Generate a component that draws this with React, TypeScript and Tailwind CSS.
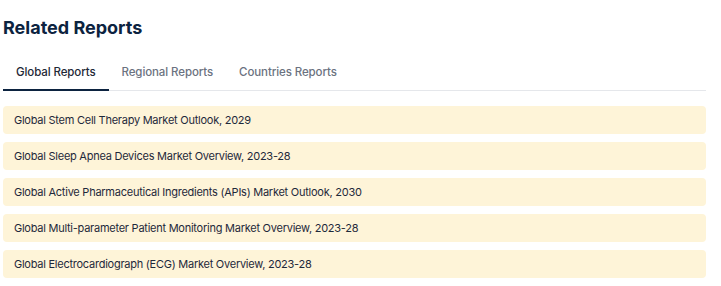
export default function App() {
  const tabs = ["Global Reports", "Regional Reports", "Countries Reports"];
  const items = [
    "Global Stem Cell Therapy Market Outlook, 2029",
    "Global Sleep Apnea Devices Market Overview, 2023-28",
    "Global Active Pharmaceutical Ingredients (APIs) Market Outlook, 2030",
    "Global Multi-parameter Patient Monitoring Market Overview, 2023-28",
    "Global Electrocardiograph (ECG) Market Overview, 2023-28",
  ];
  return (
    <div className="w-[721px] h-[286px] bg-white pl-[3px] pr-[15px] pt-[16px] font-['Inter',sans-serif]">
      <h2 className="text-[18px] leading-[24px] font-bold text-[#0c2340]">Related Reports</h2>
      <div className="mt-[23px] flex border-b border-[#e5e7eb]">
        {tabs.map((t, i) => (
          <div
            key={t}
            className={
              i === 0
                ? "px-[13px] pb-[9px] pt-[1px] text-[11.5px] leading-[16px] tracking-[-0.1px] font-medium text-[#1f2937] border-b-2 border-[#0c2340] -mb-px"
                : "px-[13px] pb-[9px] pt-[1px] text-[11.5px] leading-[16px] tracking-[-0.1px] font-medium text-[#6b7280]"
            }
          >
            {t}
          </div>
        ))}
      </div>
      <div className="mt-[15px] flex flex-col gap-[8px]">
        {items.map((t) => (
          <div
            key={t}
            className="h-[28px] rounded-[4px] bg-[#fef4d8] px-[11px] flex items-center text-[11px] tracking-[-0.25px] text-[#1e293b]"
          >
            {t}
          </div>
        ))}
      </div>
    </div>
  );
}
